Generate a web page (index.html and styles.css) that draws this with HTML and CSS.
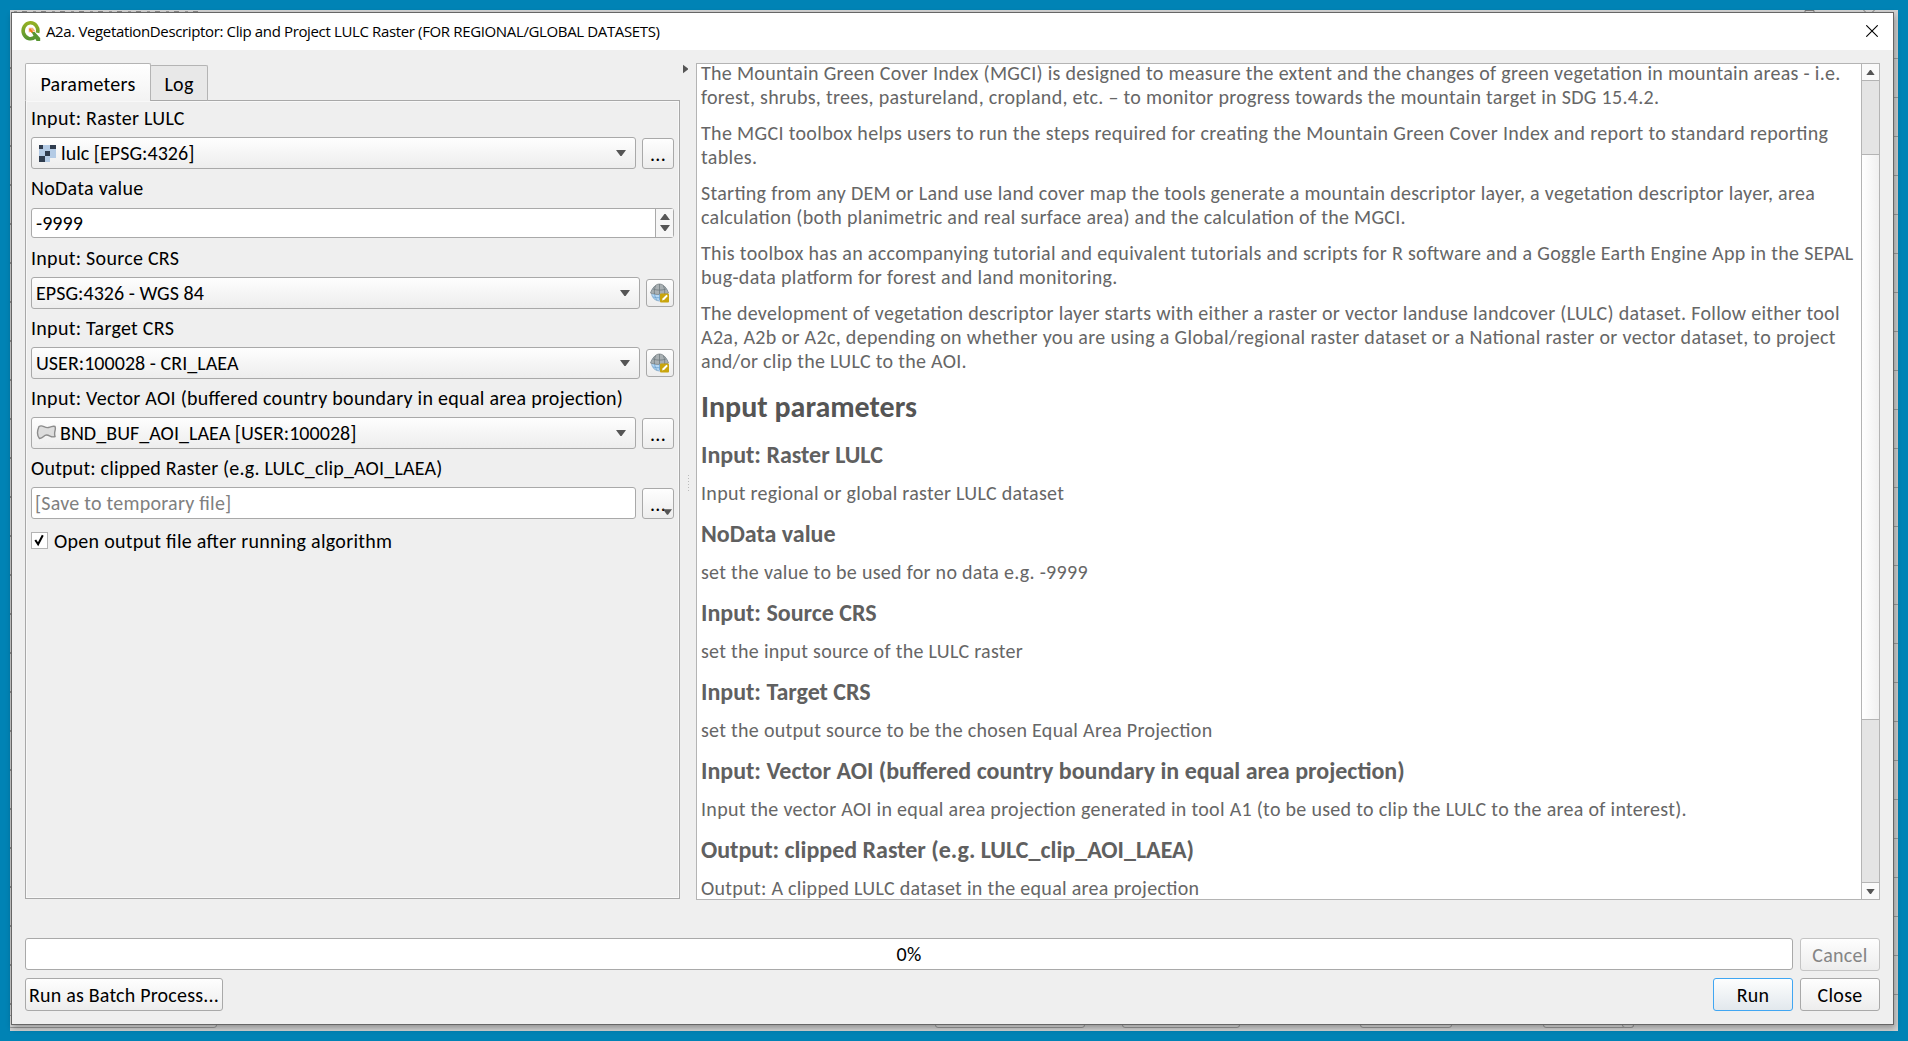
FILE: index.html
```html
<!DOCTYPE html>
<html lang="en">
<head>
<meta charset="utf-8">
<title>A2a. VegetationDescriptor</title>
<link rel="stylesheet" href="styles.css">
</head>
<body>
<svg width="0" height="0" class="defs">
  <defs>
    <symbol id="down" viewBox="0 0 10 6"><path d="M0 0h10L5.600 6h-1.200z" fill="#555"/></symbol>
    <symbol id="up" viewBox="0 0 10 6"><path d="M0 6h10L5.600 0h-1.200z" fill="#555"/></symbol>
    <symbol id="globe" viewBox="0 0 20 20">
      <circle cx="9.500" cy="10" r="8" fill="#b5d8f5" stroke="#7fa6c6" stroke-width=".8"/>
      <path d="M.5 10C2 6 5 1 9.500 1S17 6 18.500 10c-5 2-13 2-18 0z" fill="#a9b0b3" stroke="#7d8588" stroke-width=".8"/>
      <path d="M9.500 1v10M5.500 3C4.500 5 4 8 4.500 11M13.500 3c1.200 3 1.500 5 1 8M3 6c4 1.500 9 1.500 13 0" fill="none" stroke="#707b80" stroke-width=".8"/>
      <path d="M9.500 11v6M4.500 11c.3 2 1 4 2.500 6M3 14c4 1 9 1 12 0" fill="none" stroke="#6fa3cf" stroke-width=".8"/>
      <rect x="10" y="10.500" width="9" height="9" rx="1" fill="#c9a50d"/>
      <path d="M12 17.500l.8-2.300 3.600-3.500 1.400 1.400-3.500 3.600z" fill="#fff"/>
    </symbol>
  </defs>
</svg>
<div class="desktop">
  <div class="behind">
    <i class="behind-title"></i>
    <svg class="behind-buttons" viewBox="0 0 76 3"><path d="M3 3V.5h9V3M61.500 0l3 3M72.500 0l-3 3" fill="none" stroke="#777"/></svg>
    <i class="frag f1"></i><i class="frag f2"></i><i class="frag f3"></i><i class="frag f4"></i><i class="frag f5"></i><i class="frag f6"></i>
    <i class="edge e1"></i><i class="edge e2"></i>
  </div>
  <main class="dialog">
    <header class="titlebar">
      <svg class="logo" viewBox="0 0 20 24"><defs><linearGradient id="g" x2="0" y2="1"><stop stop-color="#93b023"/><stop offset="1" stop-color="#589632"/></linearGradient></defs>
        <path d="M14.500 18.500A8 8.700 0 1 1 17.200 14" fill="none" stroke="url(#g)" stroke-width="4"/>
        <path d="M10.500 13h3.500l6 6.500V23h-4z" fill="#589632"/><path d="M7.500 8.500h4.500l3 4h-4l-3.500 1z" fill="#f3b27a"/><path d="M8.500 10l3 3.500" stroke="#ee7913" stroke-width="2"/></svg>
      <span class="title">A2a. VegetationDescriptor: Clip and Project LULC Raster (FOR REGIONAL/GLOBAL DATASETS)</span>
      <svg class="x" viewBox="0 0 12 12"><path d="M.3.3l11.400 11.400M11.700.3L.3 11.700" stroke="#000" stroke-width="1.100"/></svg>
    </header>
    <div class="body">
      <div class="columns">
        <section class="left">
          <nav class="tabs"><div class="tab on"><span>Parameters</span></div><div class="tab"><span>Log</span></div></nav>
          <div class="panel">
            <div class="field"><label>Input: Raster LULC</label><div class="row"><div class="box combo"><svg class="raster" viewBox="0 0 4 4" preserveAspectRatio="none" shape-rendering="crispEdges"><path fill="#b4cbe5" d="M0 0h4v3H0z"/><path fill="#b4cbe5" d="M0 3h2.700v1H0z"/><path fill="#2f3c4e" d="M0 0h1v1H0zM2.700 0H4v1H2.700zM1.400 1.300h1.300v1.200H1.400zM0 2.600h1.400V4H0z"/></svg><span>lulc [EPSG:4326]</span><svg class="arr"><use href="#down"/></svg></div><div class="box dots">...</div></div></div>
            <div class="field"><label>NoData value</label><div class="row"><div class="box spin"><span>-9999</span><div class="steps"><svg><use href="#up"/></svg><svg><use href="#down"/></svg></div></div></div></div>
            <div class="field"><label>Input: Source CRS</label><div class="row"><div class="box combo"><span>EPSG:4326 - WGS 84</span><svg class="arr"><use href="#down"/></svg></div><div class="box crs"><svg><use href="#globe"/></svg></div></div></div>
            <div class="field"><label>Input: Target CRS</label><div class="row"><div class="box combo"><span>USER:100028 - CRI_LAEA</span><svg class="arr"><use href="#down"/></svg></div><div class="box crs"><svg><use href="#globe"/></svg></div></div></div>
            <div class="field"><label>Input: Vector AOI (buffered country boundary in equal area projection)</label><div class="row"><div class="box combo"><svg class="poly" viewBox="0 0 20 16"><path d="M2.500 2.500C6 0 8 4.500 12 3.500s4.500-2 6.500-1c1.500 3-1.500 5 0 10-4 1.500-5-1.500-8.500-1.500-3 0-3 3.500-7 3.500C0 11 1 6 2.500 2.500z" fill="#ddd" stroke="#8c8c8c" stroke-width="1.400"/></svg><span>BND_BUF_AOI_LAEA [USER:100028]</span><svg class="arr"><use href="#down"/></svg></div><div class="box dots">...</div></div></div>
            <div class="field"><label class="snug">Output: clipped Raster (e.g. LULC_clip_AOI_LAEA)</label><div class="row"><div class="box input"><span>[Save to temporary file]</span></div><div class="box dots">...<svg class="menu"><use href="#down"/></svg></div></div></div>
            <div class="check"><i><svg viewBox="0 0 16 16"><path d="M3.500 7.500l3 4.500L11.500 2.500" fill="none" stroke="#000" stroke-width="2.200"/></svg></i><span>Open output file after running algorithm</span></div>
          </div>
        </section>
        <div class="split"><svg class="collapse" viewBox="0 0 6 10"><path d="M0 0l6 4.500v1L0 10z" fill="#555"/></svg><i></i></div>
        <section class="help">
          <article>
            <p>The Mountain Green Cover Index (MGCI) is designed to measure the extent and the changes of green vegetation in mountain areas - i.e.<br>forest, shrubs, trees, pastureland, cropland, etc. – to monitor progress towards the mountain target in SDG 15.4.2.</p>
            <p class="loose">The MGCI toolbox helps users to run the steps required for creating the Mountain Green Cover Index and report to standard reporting<br>tables.</p>
            <p>Starting from any DEM or Land use land cover map the tools generate a mountain descriptor layer, a vegetation descriptor layer, area<br>calculation (both planimetric and real surface area) and the calculation of the MGCI.</p>
            <p class="loose">This toolbox has an accompanying tutorial and equivalent tutorials and scripts for R software and a Goggle Earth Engine App in the SEPAL<br>bug-data platform for forest and land monitoring.</p>
            <p>The development of vegetation descriptor layer starts with either a raster or vector landuse landcover (LULC) dataset. Follow either tool<br><span class="loose">A2a, A2b or A2c, depending on whether you are using a Global/regional raster dataset or a National raster or vector dataset, to project</span><br>and/or clip the LULC to the AOI.</p>
            <h2>Input parameters</h2>
            <h3>Input: Raster LULC</h3><p>Input regional or global raster LULC dataset</p>
            <h3>NoData value</h3><p>set the value to be used for no data e.g. -9999</p>
            <h3>Input: Source CRS</h3><p>set the input source of the LULC raster</p>
            <h3>Input: Target CRS</h3><p>set the output source to be the chosen Equal Area Projection</p>
            <h3>Input: Vector AOI (buffered country boundary in equal area projection)</h3><p>Input the vector AOI in equal area projection generated in tool A1 (to be used to clip the LULC to the area of interest).</p>
            <h3>Output: clipped Raster (e.g. LULC_clip_AOI_LAEA)</h3><p>Output: A clipped LULC dataset in the equal area projection</p>
          </article>
          <div class="scroll"><div class="sb"><svg><use href="#up"/></svg></div><div class="thumb"></div><div class="sb last"><svg><use href="#down"/></svg></div></div>
        </section>
      </div>
      <div class="prow"><div class="box progress">0%</div><div class="box btn off">Cancel</div></div>
      <div class="brow"><div class="box btn batch">Run as Batch Process...</div><div class="box btn run">Run</div><div class="box btn">Close</div></div>
    </div>
  </main>
</div>
</body>
</html>
```
FILE: styles.css
```css
* { box-sizing: border-box; }
body { margin: 0; font: 20px/24px Carlito, Calibri, Lato, sans-serif; letter-spacing: .28px; font-feature-settings: "liga" 1, "clig" 1; color: #000; }
.defs { position: absolute; }
svg { display: block; flex: none; }
.desktop { position: relative; width: 1908px; height: 1041px; background: #0083b5; padding: 12px 14px 16px 11px; overflow: hidden; }
.behind { position: absolute; left: 10px; top: 10px; width: 1888px; height: 1021px; background: #d2d2d2; overflow: hidden; }
.behind-title { position: absolute; left: 4px; top: 1px; width: 184px; height: 1px; background: repeating-linear-gradient(90deg, #999 0 3px, transparent 3px 8px, #888 8px 13px, transparent 13px 19px); }
.behind-buttons { position: absolute; left: 1792px; top: 0; width: 76px; height: 3px; }
.frag { position: absolute; top: 1005px; height: 13px; background: #ddd; border: 1px solid #999; border-radius: 0 0 3px 3px; }
.f1 { left: -2px; width: 209px; } .f2 { left: 925px; width: 150px; } .f3 { left: 1112px; width: 118px; }
.f4 { left: 1350px; width: 92px; } .f5 { left: 1533px; width: 91px; } .f6 { left: 1612px; width: 12px; }
.edge { position: absolute; }
.e1 { left: 0; top: 20px; width: 2px; height: 980px; background: repeating-linear-gradient(#ccc 0 37px, #888 37px 39px); }
.e2 { right: 0; top: 10px; width: 5px; height: 980px; background: repeating-linear-gradient(#ccc 0 38px, #999 38px 39px); }
.dialog { position: relative; width: 1883px; height: 1013px; border: 1px solid #666; background: #efefef; box-shadow: 1px 3px 6px rgba(0,0,0,.3); display: flex; flex-direction: column; }
.titlebar { height: 37px; background: #fff; display: flex; align-items: center; padding: 0 15px 0 9px; }
.logo { width: 20px; height: 22px; margin-top: -1px; }
.title { margin: -2px 0 0 5px; font: 15px/20px "Open Sans", sans-serif; white-space: nowrap; letter-spacing: -.36px; }
.x { width: 12px; height: 12px; margin: -1px 0 0 auto; }
.body { padding: 13px 13px 0 13px; display: flex; flex-direction: column; }
.columns { display: flex; height: 837px; }
.left { width: 655px; height: 836px; display: flex; flex-direction: column; }
.tabs { display: flex; align-items: flex-end; height: 38px; margin-bottom: -1px; position: relative; }
.tab { border: 1px solid #b4b4b4; border-bottom-color: #a8a8a8; height: 36px; width: 58px; margin-left: -1px; background: #e8e8e8; display: flex; align-items: center; justify-content: center; border-radius: 2px 2px 0 0; padding-top: 2px; }
.tab.on { width: 126px; height: 38px; margin: 0; background: linear-gradient(#fff, #f3f3f3); border-bottom-color: #f3f3f3; padding-top: 3px; }
.panel { flex: 1; border: 1px solid #a8a8a8; padding: 6px 5px 0; display: flex; flex-direction: column; box-shadow: inset 0 0 0 1px #f8f8f8; }
.field { height: 70px; display: flex; flex-direction: column; flex: none; }
.field label { height: 30px; line-height: 23px; white-space: nowrap; }
.field label.snug { letter-spacing: .19px; }
.row { display: flex; gap: 6px; height: 32px; align-items: center; }
.box { border: 1px solid #a9a9a9; border-radius: 3px; background: linear-gradient(#fefefe, #ededed); display: flex; align-items: center; white-space: nowrap; }
.combo, .input { height: 32px; flex: 1; padding-left: 4px; }
.combo, .spin { letter-spacing: .04px; }
.arr { width: 10px; height: 6px; margin: 0 9px 0 auto; }
.dots { position: relative; width: 32px; height: 31px; justify-content: center; padding-top: 1px; }
.menu { position: absolute; right: 1px; bottom: 3px; width: 9px; height: 6px; }
.raster { width: 17px; height: 17px; margin: 0 5px 0 3px; }
.poly { width: 21px; height: 16px; margin: 0 3px 3px 0; }
.spin { flex: 1; height: 30px; background: #fff; padding-left: 4px; margin-top: -1px; }
.steps { margin-left: auto; width: 18px; height: 28px; border-left: 1px solid #a9a9a9; background: #f6f6f6; display: flex; flex-direction: column; align-items: center; justify-content: space-evenly; }
.steps svg { width: 10px; height: 6px; }
.crs { width: 28px; height: 28px; justify-content: center; }
.crs svg { width: 20px; height: 20px; }
.input { background: #fff; color: #808080; padding-left: 3px; letter-spacing: .24px; }
.check { display: flex; align-items: center; height: 24px; margin-top: 2px; gap: 6px; white-space: nowrap; }
.check i { width: 17px; height: 17px; border: 1px solid #b4b4b4; background: #fff; margin-top: -2px; }
.check svg { width: 15px; height: 15px; }
.split { width: 16px; display: flex; flex-direction: column; }
.collapse { width: 5px; height: 10px; margin: 1px 0 0 3px; }
.split i { width: 1px; height: 17px; margin: 401px 0 0 8px; background: repeating-linear-gradient(#bbb 0 1px, transparent 1px 3px); }
.help { width: 1184px; border: 1px solid #b4b4b4; background: #fff; display: flex; overflow: hidden; }
article { flex: 1; padding-left: 4px; margin-top: -3px; color: #666; white-space: nowrap; letter-spacing: .295px; }
article p { margin: 0 0 12px; line-height: 24px; }
.loose { letter-spacing: .33px; }
h3 + p { position: relative; top: -1px; }
h2 { margin: 18px 0 16px; font-size: 30px; line-height: 32px; color: #555; letter-spacing: 0; }
h3 { margin: 0 0 12px; font-size: 24px; line-height: 31px; color: #606060; letter-spacing: 0; }
.scroll { width: 18px; border-left: 1px solid #b4b4b4; background: #e4e4e4; display: flex; flex-direction: column; }
.sb { height: 17px; background: #fafafa; border-bottom: 1px solid #b4b4b4; display: flex; justify-content: center; align-items: center; }
.sb svg { width: 9px; height: 5px; }
.sb.last { margin-top: auto; border-bottom: 0; border-top: 1px solid #b4b4b4; }
.thumb { margin-top: 73px; height: 566px; background: linear-gradient(90deg, #fff, #f0f0f0); border: 1px solid #b4b4b4; border-width: 1px 0; }
.prow { display: flex; gap: 7px; margin-top: 38px; height: 33px; }
.progress { flex: 1; height: 32px; background: #fff; justify-content: center; }
.brow { display: flex; gap: 7px; margin-top: 7px; }
.btn { width: 80px; height: 33px; justify-content: center; }
.off { color: #858585; border-color: #c4c4c4; }
.batch { width: 198px; margin-right: auto; letter-spacing: .2px; }
.run { border-color: #40a6f2; background: linear-gradient(#fdfefe, #e2e8ed); }
```
